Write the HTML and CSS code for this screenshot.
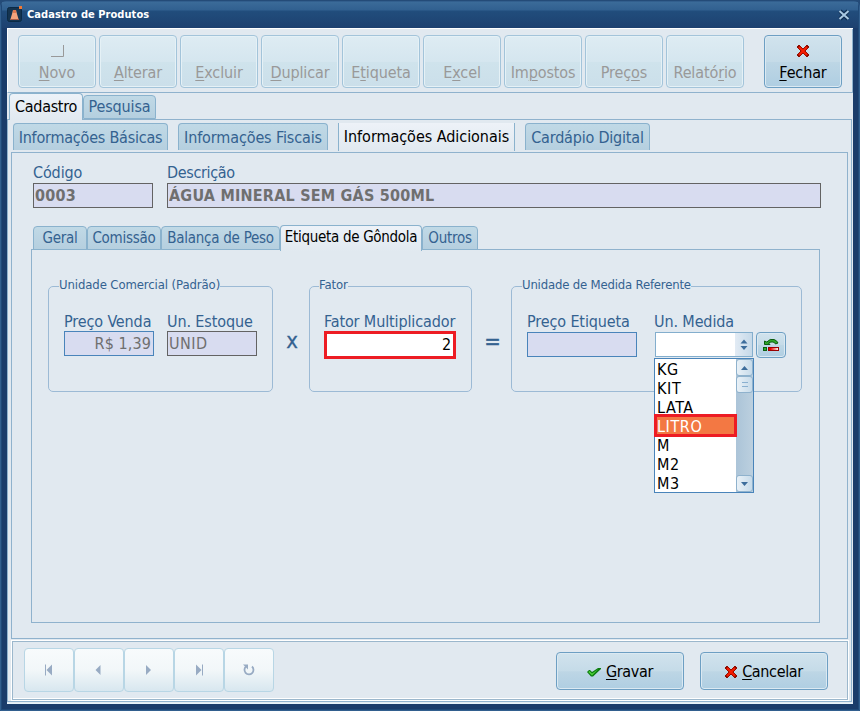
FILE: index.html
```html
<!DOCTYPE html>
<html lang="pt-BR">

<head>
    <meta charset="UTF-8" />
    <meta name="viewport" content="width=device-width, initial-scale=1.0" />
    <title>Cadastro de Produtos</title>
    <link rel="stylesheet" href="styles.css">
</head>

<body>
    <svg class="symbols" width="0" height="0">
        <symbol id="icon-x" viewBox="0 0 12 12">
            <path d="M1 0h2v1h1v1h1v1h2V2h1V1h1V0h2v1h1v2h-1v1h-1v1H9v2h1v1h1v1h1v2h-1v1H9v-1H8v-1H7V9H5v1H4v1H3v1H1v-1H0V9h1V8h1V7h1V5H2V4H1V3H0V1h1z" fill="#8c0c00" />
            <path d="M2 2l8 8M10 2l-8 8" stroke="#f81c00" stroke-width="2.2" />
        </symbol>
        <symbol id="icon-check" viewBox="0 0 14 10">
            <path d="M0 5l2-2h1l2 2 6-4h3v1L6 9.500H4z" fill="#0c7c10" />
            <path d="M1.300 5l1.200-1L5 6.500 11.500 2 5 8.400z" fill="#4cd038" />
        </symbol>
    </svg>

    <div class="window">
        <header class="titlebar">
            <svg class="app-icon" width="16" height="16" viewBox="0 0 16 16">
                <rect x="0.500" y="1.500" width="14" height="14" rx="2" fill="#153450" stroke="#0b2a45" />
                <path d="M6 4h3l1 4 1.500 5h-8L5 8z" fill="#f3a27c" />
                <path d="M6 4h3v3H6z" fill="#df7850" />
                <path d="M3 13h9v1H3z" fill="#a65c48" />
                <rect x="12" y="0" width="3" height="3" fill="#f07833" />
            </svg>
            <h1>Cadastro de Produtos</h1>
            <svg class="close" width="12" height="12" viewBox="0 0 12 12">
                <path d="M2 2l8 8M10 2l-8 8" stroke="#0f2c50" stroke-width="4" />
                <path d="M1.500 2l9 8M10.500 2l-9 8" stroke="#a9c8e2" stroke-width="2" />
            </svg>
        </header>

        <main class="client">
            <div class="toolbar">
                <button class="tool" disabled>
                    <svg width="13" height="12" viewBox="0 0 13 12"><path d="M0 11.500h12.500V0" fill="none" stroke="#999" /></svg>
                    <span><u>N</u>ovo</span>
                </button>
                <button class="tool" disabled><span><u>A</u>lterar</span></button>
                <button class="tool" disabled><span><u>E</u>xcluir</span></button>
                <button class="tool" disabled><span><u>D</u>uplicar</span></button>
                <button class="tool" disabled><span>E<u>t</u>iqueta</span></button>
                <button class="tool" disabled><span>E<u>x</u>cel</span></button>
                <button class="tool" disabled><span>Im<u>p</u>ostos</span></button>
                <button class="tool" disabled><span>Preç<u>o</u>s</span></button>
                <button class="tool" disabled><span>Relató<u>r</u>io</span></button>
                <button class="tool close-tool">
                    <svg width="12" height="12"><use href="#icon-x" /></svg>
                    <span><u>F</u>echar</span>
                </button>
            </div>

            <nav class="tabs main-tabs">
                <div class="tab active">Cadastro</div>
                <div class="tab">Pesquisa</div>
            </nav>

            <div class="main-page">
                <nav class="tabs sub-tabs">
                    <div class="tab basic">Informações Básicas</div>
                    <div class="tab fiscal">Informações Fiscais</div>
                    <div class="tab active">Informações Adicionais</div>
                    <div class="tab menu">Cardápio Digital</div>
                </nav>

                <section class="sub-page">
                    <div class="product">
                        <label class="field code">Código
                            <input type="text" value="0003" disabled>
                        </label>
                        <label class="field description">Descrição
                            <input type="text" value="ÁGUA MINERAL SEM GÁS 500ML" disabled>
                        </label>
                    </div>

                    <nav class="tabs inner-tabs">
                        <div class="tab general">Geral</div>
                        <div class="tab commission">Comissão</div>
                        <div class="tab scale">Balança de Peso</div>
                        <div class="tab active">Etiqueta de Gôndola</div>
                        <div class="tab others">Outros</div>
                    </nav>

                    <div class="inner-page">
                        <fieldset class="commercial">
                            <legend>Unidade Comercial (Padrão)</legend>
                            <label class="field price">Preço Venda
                                <input type="text" value="R$ 1,39" disabled>
                            </label>
                            <label class="field stock">Un. Estoque
                                <input type="text" value="UNID" disabled>
                            </label>
                        </fieldset>
                        <span class="operator">x</span>
                        <fieldset class="factor">
                            <legend>Fator</legend>
                            <label class="field">Fator Multiplicador
                                <input type="text" value="2">
                            </label>
                        </fieldset>
                        <span class="operator equals">=</span>
                        <fieldset class="reference">
                            <legend>Unidade de Medida Referente</legend>
                            <label class="field tag-price">Preço Etiqueta
                                <input type="text" disabled>
                            </label>
                            <div class="field measure">Un. Medida
                                <div class="combo">
                                    <svg width="17" height="23" viewBox="0 0 17 23">
                                        <path d="M5.500 10.500l3.500-4 3.500 4zM5.500 13l3.500 4 3.500-4z" fill="#3d6d9c" />
                                    </svg>
                                </div>
                                <div class="dropdown">
                                    <ul>
                                        <li>KG</li>
                                        <li>KIT</li>
                                        <li>LATA</li>
                                        <li class="selected">LITRO</li>
                                        <li>M</li>
                                        <li>M2</li>
                                        <li>M3</li>
                                    </ul>
                                    <div class="scrollbar">
                                        <span class="thumb"><svg width="7" height="4"><path d="M0 4l3.500-4L7 4z" fill="#3d6d9c" /></svg></span>
                                        <span class="thumb"><svg width="6" height="5"><path d="M0 .5h6M0 4.500h6" stroke="#8ab0d0" /></svg></span>
                                        <span class="thumb down"><svg width="7" height="4"><path d="M0 0h7L3.500 4z" fill="#3d6d9c" /></svg></span>
                                    </div>
                                </div>
                            </div>
                            <button class="clear">
                                <svg width="17" height="14" viewBox="0 0 17 14">
                                    <path d="M1.500 3v3.500h5.500L5.500 5Q8 3.500 10 4t2.500 2l2.500-1Q14 2.500 11 1.500 7 .3 3.800 4z" fill="#2fa82a" stroke="#0c5c10" />
                                    <rect x="0.500" y="9.500" width="3" height="3" fill="#2fae2f" stroke="#0c5c10" />
                                    <rect x="5.500" y="9.500" width="10" height="3" fill="url(#fade)" stroke="#900" />
                                    <linearGradient id="fade"><stop offset="0.200" stop-color="#e00" /><stop offset="1" stop-color="#fff" /></linearGradient>
                                </svg>
                            </button>
                        </fieldset>
                    </div>
                </section>

                <footer class="footer">
                    <div class="navigator">
                        <button disabled><svg width="8" height="12"><path d="M.5.5v11" stroke="#98abc3" /><path d="M7 .5v11L1.500 6z" fill="#98abc3" /></svg></button>
                        <button disabled><svg width="8" height="12"><path d="M5.500 1v10L.5 6z" fill="#98abc3" /></svg></button>
                        <button disabled><svg width="8" height="12"><path d="M1 1v10l5-5z" fill="#98abc3" /></svg></button>
                        <button disabled><svg width="8" height="12"><path d="M7.500.5v11" stroke="#98abc3" /><path d="M1 .5v11L6.500 6z" fill="#98abc3" /></svg></button>
                        <button disabled><svg width="12" height="12"><path d="M3.200 2.300A4.500 4.500 0 1 0 9 2.500" fill="none" stroke="#98abc3" stroke-width="1.800" /><path d="M0 .5h5v5z" fill="#98abc3" /></svg></button>
                    </div>
                    <button class="action">
                        <svg width="14" height="10"><use href="#icon-check" /></svg>
                        <span><u>G</u>ravar</span>
                    </button>
                    <button class="action">
                        <svg width="12" height="12"><use href="#icon-x" /></svg>
                        <span><u>C</u>ancelar</span>
                    </button>
                </footer>
            </div>
        </main>
    </div>
</body>

</html>
```
FILE: styles.css
```css
* {
    box-sizing: border-box;
    margin: 0;
    padding: 0;
}

body {
    background: #244b78;
    color: #346290;
    font: 16px/19px "DejaVu Sans Condensed", "DejaVu Sans", sans-serif;
    font-stretch: condensed;
    height: 711px;
    letter-spacing: -0.12px;
    overflow: hidden;
    width: 860px;
}

button,
input {
    color: inherit;
    font: inherit;
    letter-spacing: inherit;
}

svg {
    display: block;
    flex: none;
}

u {
    text-decoration-thickness: 1px;
    text-underline-offset: 2px;
}

.symbols {
    position: absolute;
}

.window {
    background: #1a3c6a;
    border: 1px solid #325f8e;
    border-radius: 6px 6px 0 0;
    box-shadow: inset 0 0 0 1px #1f4977;
    height: 710px;
    margin-top: 1px;
    padding: 0 6px;
}

.titlebar {
    align-items: center;
    background: linear-gradient(#3b6b99, #316090 8px, #214d7c 9px, #1d4170);
    display: flex;
    height: 26px;
    margin: 0 -5px;
    padding: 0 8px 1px 5px;
}

.titlebar h1 {
    color: #fff;
    flex: 1;
    font-size: 11px;
    letter-spacing: 0.05px;
    line-height: 14px;
    margin-left: 4px;
}

.app-icon {
    margin-bottom: 1px;
}

.client {
    background: #e1e9f0;
    border-bottom: 1px solid #e6f3fa;
    border-top: 1px solid #fff;
    height: 676px;
    width: 846px;
}

.toolbar {
    border-bottom: 1px solid #8fb2cd;
    border-left: 1px solid #fff;
    border-right: 1px solid #8fb2cd;
    display: flex;
    gap: 3px;
    height: 64px;
    padding: 6px 10px;
}

.tool {
    align-items: center;
    background: linear-gradient(#deecf3, #d5e6ef 50%, #cfe3ec 52%, #cbdfea);
    border: 1px solid #a3c4da;
    border-radius: 4px;
    box-shadow: inset 0 0 0 1px #e5f1f6;
    color: #999;
    display: flex;
    flex-direction: column;
    height: 53px;
    justify-content: flex-end;
    padding-bottom: 5px;
    white-space: nowrap;
    width: 78px;
}

.tool svg {
    margin-bottom: 6px;
}

.close-tool,
.action,
.clear {
    background: linear-gradient(#d1e3ed, #c5dbe8 50%, #bdd6e5 52%, #afcee2);
    border: 1px solid #6d9fc3;
    box-shadow: inset 0 0 0 1px #dbe9f2;
    color: #000;
}

.close-tool {
    margin-left: auto;
}

.tabs {
    align-items: flex-end;
    display: flex;
}

.tab {
    background: linear-gradient(#c0d9e6, #b5cfdf);
    border: 1px solid #8ab2cd;
    border-radius: 4px 4px 0 0;
    text-align: center;
    white-space: nowrap;
}

.tab.active {
    background: linear-gradient(#edf2f8, #e1e9f0);
    border-bottom: 0;
    color: #000;
    position: relative;
}

.main-tabs {
    height: 26px;
    padding-left: 2px;
}

.main-tabs .tab {
    height: 24px;
    padding-top: 1px;
    width: 73px;
}

.main-tabs .active {
    height: 27px;
    letter-spacing: -0.3px;
    margin-bottom: -1px;
    padding-top: 3px;
    width: 74px;
}

.main-page {
    border: 1px solid #8fb2cd;
    height: 583px;
    padding: 3px 3px 0;
    width: 845px;
}

.sub-tabs {
    align-items: flex-start;
    gap: 10px;
    height: 29px;
    padding-left: 2px;
}

.sub-tabs .tab {
    border-bottom: 0;
    height: 27px;
    padding-top: 4px;
    width: 150px;
}

.sub-tabs .basic {
    letter-spacing: -0.22px;
    width: 155px;
}

.sub-tabs .active {
    border-radius: 0;
    border-top: 0;
    height: 28px;
    letter-spacing: -0.04px;
    padding-top: 4px;
    width: 177px;
}

.sub-tabs .menu {
    letter-spacing: -0.2px;
    width: 125px;
}

.sub-page {
    border: 1px solid #8fb2cd;
    height: 487px;
    padding: 10px 19px 0;
}

.product {
    display: flex;
    gap: 14px;
    padding-left: 2px;
}

.field {
    display: block;
    white-space: nowrap;
}

.field input {
    background: #d8dcf0;
    border: 1px solid #636363;
    color: #6f6f6f;
    display: block;
    height: 25px;
    padding: 0 2px 1px 1px;
    width: 100%;
}

.product input {
    font-weight: bold;
    letter-spacing: 0.22px;
    margin-top: 1px;
}

.description {
    letter-spacing: -0.35px;
    width: 654px;
}

.code {
    width: 120px;
}

.inner-tabs {
    font-size: 15px;
    height: 42px;
    letter-spacing: -0.25px;
    padding-left: 2px;
}

.inner-tabs .tab {
    height: 24px;
    padding-top: 2px;
}

.general {
    width: 54px;
}

.commission {
    width: 74px;
}

.scale {
    width: 119px;
}

.inner-tabs .active {
    height: 26px;
    letter-spacing: -0.3px;
    margin-bottom: -1px;
    padding-top: 2px;
    width: 142px;
}

.others {
    width: 56px;
}

.inner-page {
    border: 1px solid #8fb2cd;
    display: flex;
    height: 374px;
    margin-top: -1px;
    padding: 28px 16px 0;
    width: 789px;
}

fieldset {
    border: 1px solid #9cbad5;
    border-radius: 5px;
    display: flex;
    gap: 13px;
    height: 114px;
    padding: 18px 15px 0;
}

legend {
    font-size: 13px;
    letter-spacing: -0.1px;
    line-height: 14px;
    margin-left: -5px;
    padding-bottom: 2px;
}

.commercial {
    width: 225px;
}

.commercial .field,
.commercial input {
    width: 90px;
}

.price input {
    border-color: #4984ba;
    letter-spacing: 0.1px;
    text-align: right;
}

.stock input {
    letter-spacing: 0.5px;
}

.operator {
    -webkit-text-stroke: 0.3px;
    font-size: 22px;
    line-height: 20px;
    padding: 53px 0 0 2px;
    text-align: center;
    width: 36px;
}

.equals {
    padding-top: 54px;
    width: 39px;
}

.factor {
    padding-left: 14px;
    width: 163px;
}

.factor .field {
    width: 132px;
}

.factor input {
    background: #fff;
    border: 3px solid #ed1c24;
    color: #000;
    height: 28px;
    padding-right: 2px;
    text-align: right;
}

.reference {
    gap: 0;
    width: 291px;
}

.reference legend {
    letter-spacing: -0.18px;
}

.tag-price {
    width: 110px;
}

.tag-price input {
    border-color: #4984ba;
    margin-top: 1px;
}

.measure {
    margin-left: 17px;
    position: relative;
    width: 100px;
}

.combo {
    background: #fff;
    border: 1px solid #83aecd;
    height: 25px;
    margin: 1px 0 0 1px;
    width: 98px;
}

.combo svg {
    background: linear-gradient(90deg, #e2ebf4, #c5d9e9);
    margin-left: auto;
}

.dropdown {
    background: #fff;
    border: 1px solid #4984ba;
    color: #000;
    display: flex;
    height: 135px;
    left: 0;
    position: absolute;
    top: 46px;
    width: 100px;
}

.dropdown ul {
    flex: 1;
    letter-spacing: 0.6px;
    list-style: none;
    padding-top: 1px;
}

.dropdown li {
    height: 19px;
    padding-left: 2px;
}

.dropdown .selected {
    background: #f37843;
    box-shadow: 0 0 0 3px #ed1c24;
    color: #fff;
    height: 17px;
    margin: 0 0 2px 2px;
    padding-left: 0;
    position: relative;
    width: 77px;
}

.scrollbar {
    background: linear-gradient(90deg, #abc4d8, #bcd0df);
    display: flex;
    flex-direction: column;
    width: 17px;
}

.thumb {
    align-items: center;
    background: linear-gradient(90deg, #e9f1f7, #c7dbea);
    border: 1px solid #8fb2cd;
    border-radius: 3px;
    display: flex;
    height: 17px;
    justify-content: center;
}

.down {
    margin-top: auto;
}

.clear {
    align-items: center;
    border-radius: 4px;
    display: flex;
    height: 26px;
    justify-content: center;
    margin: 20px 0 0 2px;
    width: 30px;
}

.footer {
    align-items: center;
    border: 1px solid #9bb7cc;
    box-shadow: 0 0 0 1px #fff, inset 0 -1px #fff;
    display: flex;
    gap: 16px;
    height: 59px;
    margin: 2px 0 0 1px;
    padding: 0 19px 2px 11px;
}

.navigator {
    display: flex;
    margin-right: auto;
}

.navigator button {
    align-items: center;
    background: linear-gradient(#f8fbfc, #f2f7f9 50%, #d8e7ef);
    border: 1px solid #b8d6e5;
    border-radius: 4px;
    display: flex;
    height: 44px;
    justify-content: center;
    width: 50px;
}

.action {
    align-items: center;
    border-radius: 4px;
    display: flex;
    gap: 5px;
    height: 38px;
    justify-content: center;
    letter-spacing: -0.35px;
    margin-top: 2px;
    padding-top: 2px;
    width: 128px;
}
```
